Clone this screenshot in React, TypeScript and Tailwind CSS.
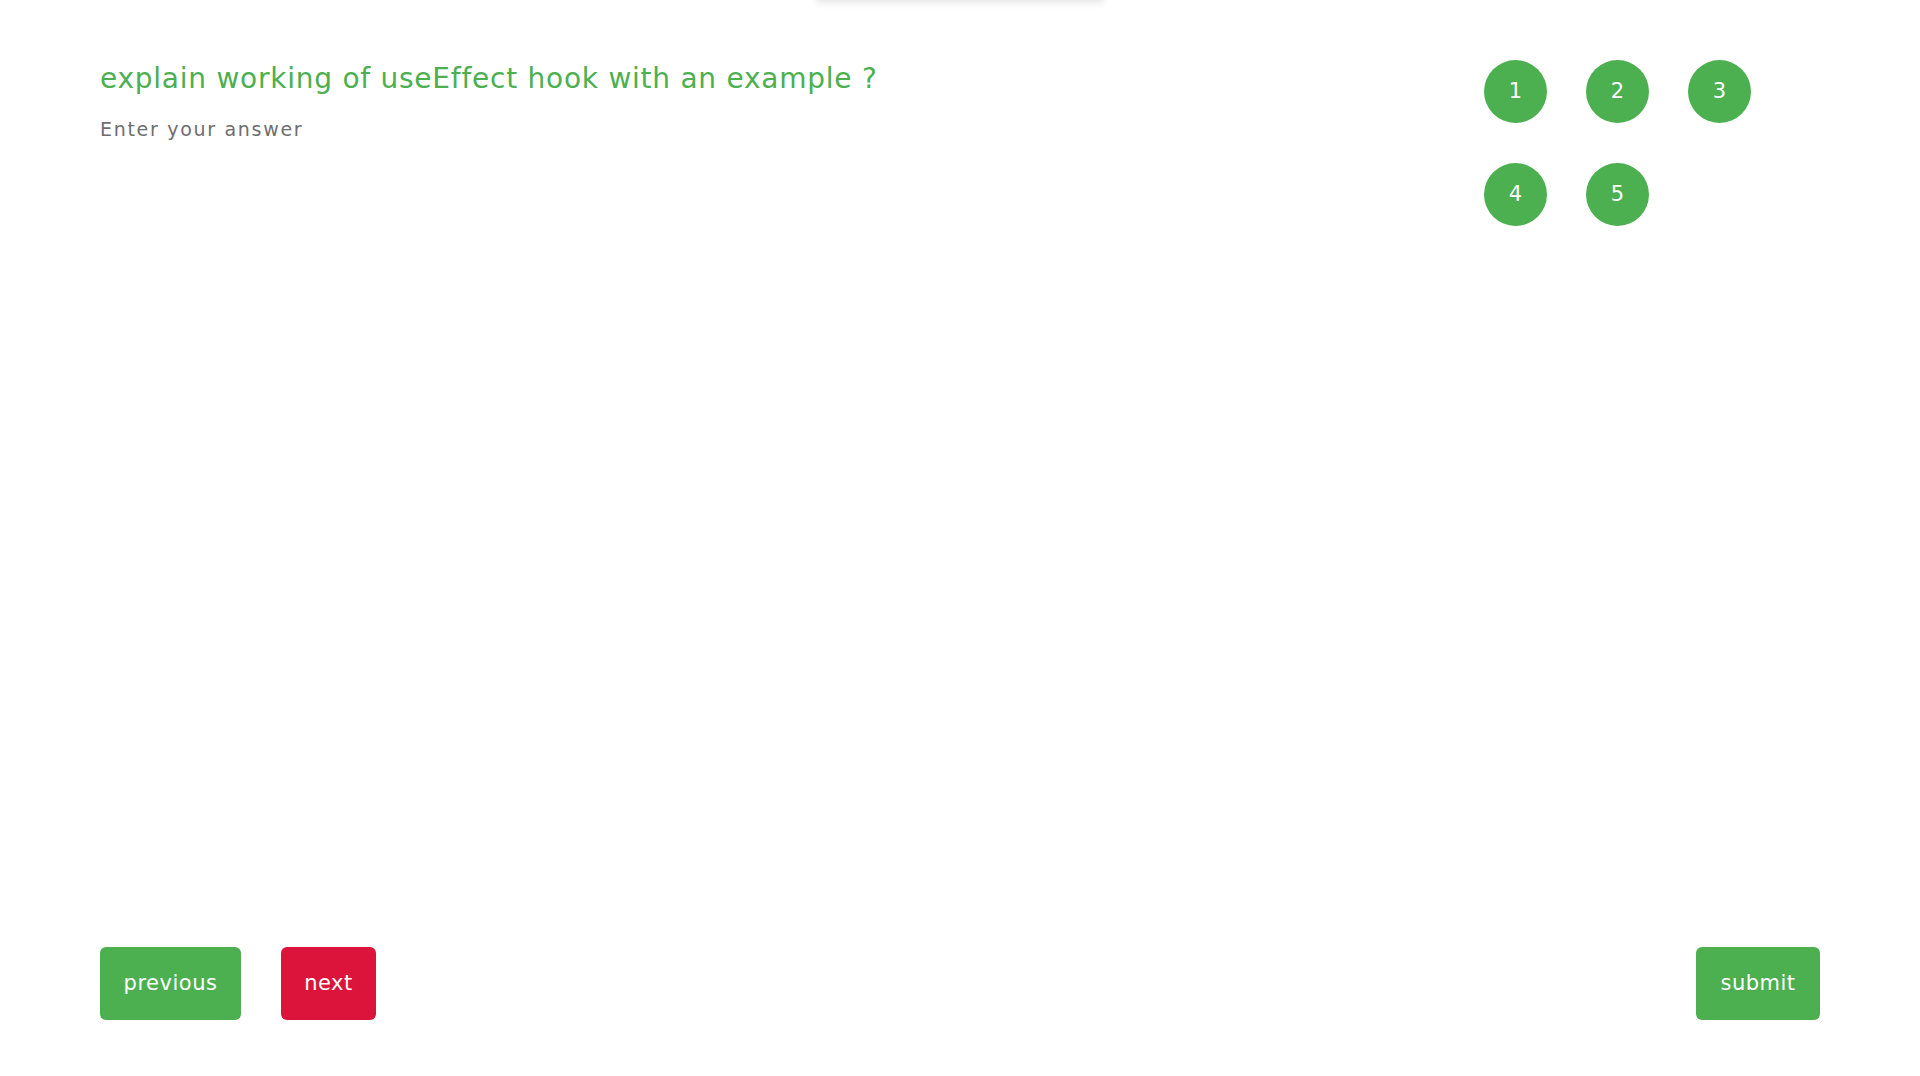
const questions = [1, 2, 3, 4, 5]

const App = () => {
  return (
    <div className="relative min-h-screen bg-white font-['DejaVu_Sans',sans-serif] overflow-hidden">
      {/* toast parked above the viewport, only its shadow shows */}
      <div className="absolute left-[815px] top-[-60px] h-[60px] w-[290px] rounded-md bg-white shadow-[0_2px_8px_rgba(0,0,0,0.12)]" />

      <div className="flex min-h-screen flex-col justify-between px-[100px] pt-[60px] pb-[56px]">
        <div className="flex justify-between">
          <div>
            <h2 className="text-[28px] leading-[38px] tracking-[0.75px] text-[#4caf50]">
              explain working of useEffect hook with an example ?
            </h2>
            <p className="mt-[17px] text-[19px] tracking-[1.7px] text-[#6e6e6e]">Enter your answer</p>
          </div>
          <div className="mr-[69px] grid grid-cols-3 gap-x-[39px] gap-y-[40px] self-start">
            {questions.map((q) => (
              <button
                key={q}
                className="flex h-[63px] w-[63px] items-center justify-center rounded-full bg-[#4caf50] text-[21px] text-white"
              >
                {q}
              </button>
            ))}
          </div>
        </div>

        <div className="flex items-center justify-between">
          <div className="flex gap-[40px]">
            <button className="h-[73px] w-[141px] rounded-md bg-[#4caf50] text-[21px] tracking-[0.5px] text-white">
              previous
            </button>
            <button className="h-[73px] w-[95px] rounded-md bg-[#dc143c] text-[21px] tracking-[0.5px] text-white">
              next
            </button>
          </div>
          <button className="h-[73px] w-[124px] rounded-md bg-[#4caf50] text-[21px] tracking-[0.5px] text-white">
            submit
          </button>
        </div>
      </div>
    </div>
  )
}

export default App
